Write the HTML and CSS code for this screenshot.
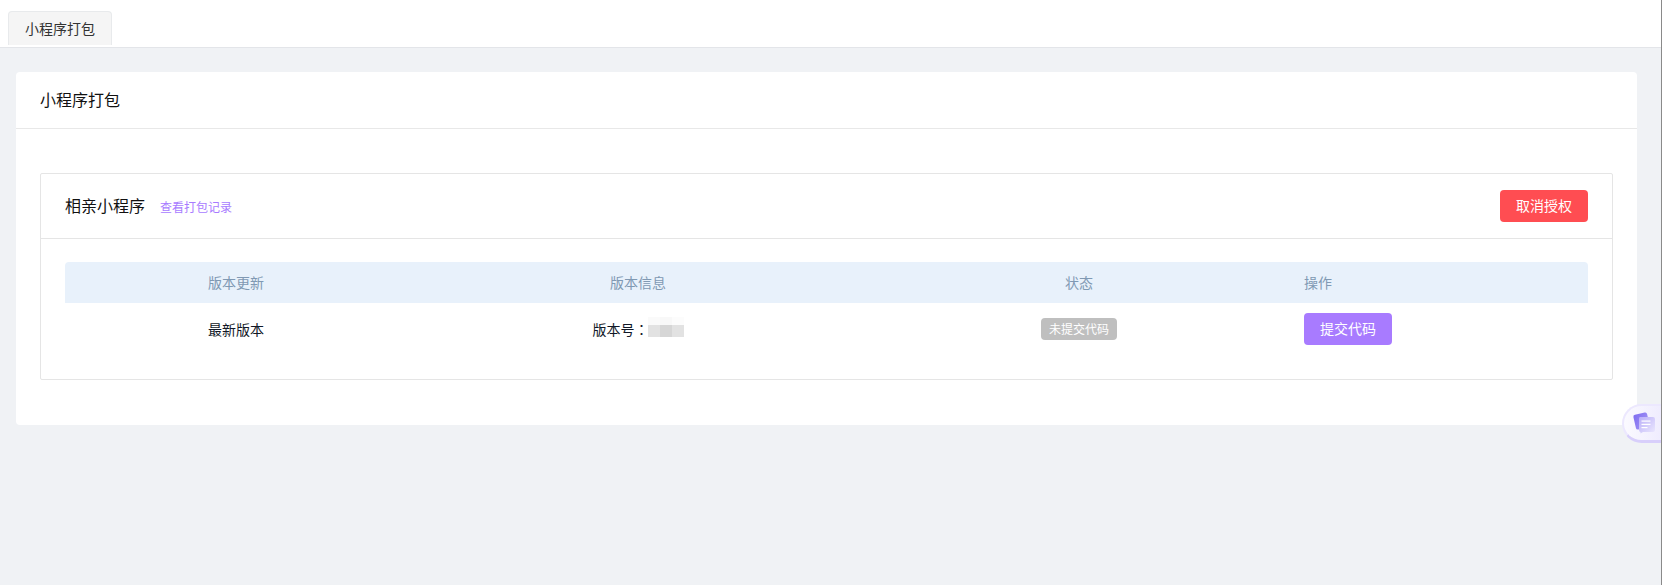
FILE: index.html
```html
<!DOCTYPE html>
<html lang="zh-CN">
  <head>
    <meta charset="UTF-8" />
    <meta name="viewport" content="width=device-width, initial-scale=1.0" />
    <title>小程序打包</title>
    <link rel="stylesheet" href="styles.css">
  </head>
  <body>
    <div class="tabs">
      <div class="tab">小程序打包</div>
    </div>

    <div class="content">
      <div class="card">
        <div class="card-title">小程序打包</div>
        <div class="card-body">
          <div class="panel">
            <div class="panel-head">
              <div class="panel-name">
                <span class="app-name">相亲小程序</span>
                <a class="record-link" href="#">查看打包记录</a>
              </div>
              <button class="btn btn-red" type="button">取消授权</button>
            </div>
            <div class="panel-body">
              <div class="version-head">
                <div class="cell">版本更新</div>
                <div class="cell">版本信息</div>
                <div class="cell">状态</div>
                <div class="cell cell-left">操作</div>
              </div>
              <div class="version-row">
                <div class="cell">最新版本</div>
                <div class="cell">
                  <span class="version-no">版本号<span class="colon">：</span><span class="blur-box">
                    <i class="px1"></i><i class="px2"></i><i class="px3"></i>
                  </span></span>
                </div>
                <div class="cell"><span class="tag">未提交代码</span></div>
                <div class="cell cell-left">
                  <button class="btn btn-purple" type="button">提交代码</button>
                </div>
              </div>
            </div>
          </div>
        </div>
      </div>
    </div>

    <!-- floating help button -->
    <div class="float-help">
      <svg width="24" height="24" viewBox="0 0 24 24">
        <defs>
          <linearGradient id="noteBack" x1="0" y1="0" x2="1" y2="1">
            <stop offset="0" stop-color="#7f6cf0" />
            <stop offset="1" stop-color="#a89bf6" />
          </linearGradient>
          <linearGradient id="noteFront" x1="0" y1="0" x2="1" y2="1">
            <stop offset="0" stop-color="#b9aef8" />
            <stop offset="1" stop-color="#ece9fe" />
          </linearGradient>
        </defs>
        <rect x="2.5" y="2.5" width="14" height="15" rx="2" fill="url(#noteBack)" transform="rotate(-13 9.5 10)" />
        <path d="M8 6 L21 6 Q23 6 23 8 L23 19 Q23 21 21 21 L11 21 L8.5 22.5 L8.5 21 Q7 21 7 19 L7 8 Q7 6 8 6 Z" fill="url(#noteFront)" />
        <rect x="9.5" y="9.5" width="9" height="1.2" fill="#fff" />
        <rect x="9.5" y="12.8" width="9" height="1.2" fill="#fff" />
        <rect x="9.5" y="16" width="6" height="1.2" fill="#fff" />
      </svg>
    </div>
  </body>
</html>
```

FILE: styles.css
```css
* {
  box-sizing: border-box;
}
html {
  height: 100%;
  background-color: #fff;
}
body {
  height: 585px;
  margin: 0;
  font-family: "Noto Sans CJK SC", "Liberation Sans", sans-serif;
  font-size: 14px;
  color: #17233d;
  background-color: #f0f2f5;
  border-right: 1px solid #8a8a8a;
  overflow: hidden;
}
.tabs {
  height: 48px;
  padding: 11px 0 0 8px;
  background-color: #fff;
  border-bottom: 1px solid #e3e5e9;
}
.tab {
  width: 104px;
  height: 34px;
  padding-bottom: 2px;
  line-height: 32px;
  text-align: center;
  font-size: 14px;
  color: #333;
  background-color: #f5f5f5;
  border: 1px solid #e8eaec;
  border-bottom: none;
  border-radius: 4px 4px 0 0;
}
.content {
  padding: 24px 24px 0 16px;
}
.card {
  height: 353px;
  background-color: #fff;
  border-radius: 4px;
}
.card-title {
  height: 57px;
  padding-left: 24px;
  line-height: 54px;
  font-size: 16px;
  color: #111;
  border-bottom: 1px solid #e8e8e8;
}
.card-body {
  padding: 44px 24px 0;
}
.panel {
  height: 207px;
  border: 1px solid #e5e5e5;
  border-radius: 2px;
}
.panel-head {
  display: flex;
  justify-content: space-between;
  align-items: center;
  height: 65px;
  padding: 0 24px;
  border-bottom: 1px solid #e5e5e5;
}
.panel-name {
  display: flex;
  align-items: center;
  gap: 15px;
  padding-bottom: 2px;
}
.app-name {
  font-size: 16px;
  color: #111;
}
.record-link {
  padding-top: 2px;
  font-size: 12px;
  color: #a87bff;
  text-decoration: none;
}
.btn {
  width: 88px;
  height: 32px;
  padding: 0 0 2px;
  border: none;
  border-radius: 4px;
  font-family: inherit;
  font-size: 14px;
  color: #fff;
  cursor: pointer;
}
.btn-red {
  background-color: #ff4d52;
}
.btn-purple {
  background-color: #a87bff;
}
.panel-body {
  padding: 23px 24px 0;
}
.version-head,
.version-row {
  display: grid;
  grid-template-columns: 342px 462px 420px 1fr;
  align-items: center;
}
.version-head {
  height: 41px;
  padding-bottom: 2px;
  color: #8099b3;
  background-color: #e8f1fb;
  border-radius: 4px 4px 0 0;
}
.version-row {
  height: 52px;
  color: #111827;
}
.cell {
  text-align: center;
}
.cell-left {
  padding-left: 15px;
  text-align: left;
}
.version-no {
  display: inline-flex;
  align-items: center;
}
.colon {
  font-family: "Noto Sans CJK TC", sans-serif;
}
.blur-box {
  display: inline-flex;
  width: 36px;
  height: 20px;
  margin-top: -4px;
  margin-left: -1px;
}
.blur-box i {
  flex: 1;
}
.px1 {
  background: linear-gradient(#fafafa 8px, #e2e2e2 8px);
}
.px2 {
  background: linear-gradient(#f8f8f8 8px, #d6d6d6 8px);
}
.px3 {
  background: linear-gradient(#fcfcfc 8px, #e2e2e2 8px);
}
.tag {
  display: inline-block;
  padding: 0 8px;
  height: 22px;
  line-height: 21px;
  font-size: 12px;
  color: #fff;
  background-color: #bfbfbf;
  border-radius: 4px;
}
.float-help {
  position: absolute;
  top: 404px;
  right: 1px;
  display: flex;
  align-items: center;
  padding-left: 8px;
  width: 39px;
  height: 39px;
  background: linear-gradient(90deg, #fbfaff, #efecfe);
  border: 2px solid #ece8fe;
  border-bottom: 3px solid #d8cffb;
  border-right: none;
  border-radius: 20px 0 0 20px;
}
```
